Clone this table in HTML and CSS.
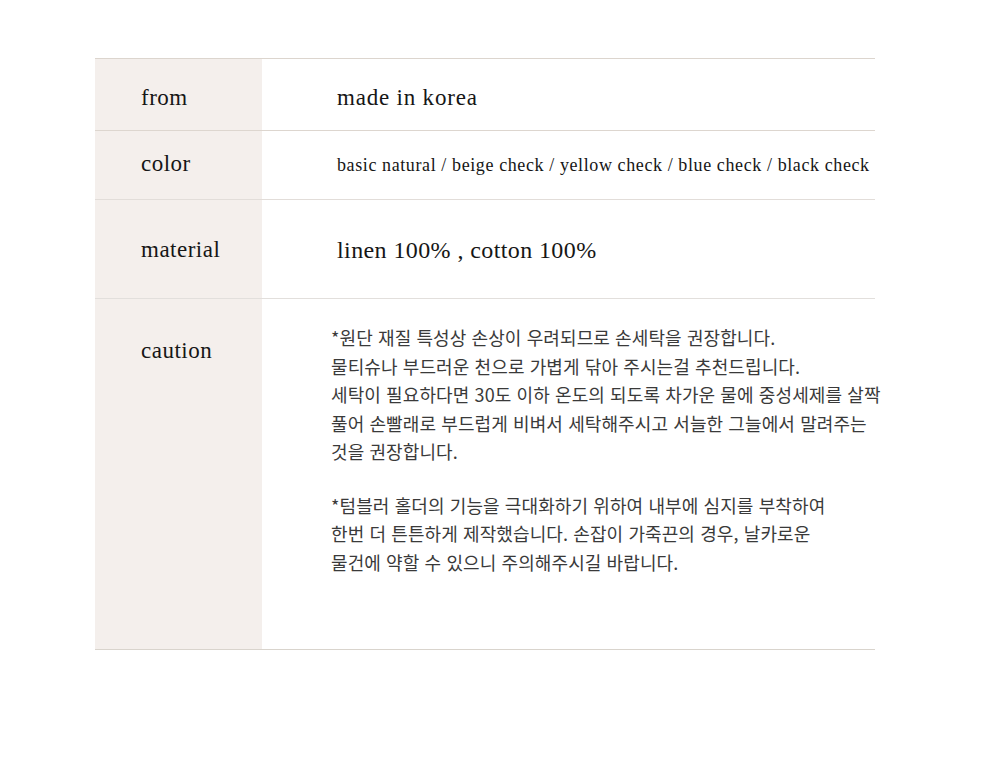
FILE: index.html
```html
<!DOCTYPE html>
<html lang="ko">
<head>
<meta charset="utf-8">
<title>Product info</title>
<link rel="stylesheet" href="styles.css">
</head>
<body>
<div class="table">
  <div class="row row-from">
    <div class="label">from</div>
    <div class="value">made in korea</div>
  </div>
  <div class="row row-color">
    <div class="label">color</div>
    <div class="value small">basic natural / beige check / yellow check / blue check / black check</div>
  </div>
  <div class="row row-material">
    <div class="label">material</div>
    <div class="value">linen 100% , cotton 100%</div>
  </div>
  <div class="row row-caution">
    <div class="label label-top">caution</div>
    <div class="value ko">
      <p>*원단 재질 특성상 손상이 우려되므로 손세탁을 권장합니다.<br>물티슈나 부드러운 천으로 가볍게 닦아 주시는걸 추천드립니다.<br>세탁이 필요하다면 30도 이하 온도의 되도록 차가운 물에 중성세제를 살짝<br>풀어 손빨래로 부드럽게 비벼서 세탁해주시고 서늘한 그늘에서 말려주는<br>것을 권장합니다.</p>
      <p>*텀블러 홀더의 기능을 극대화하기 위하여 내부에 심지를 부착하여<br>한번 더 튼튼하게 제작했습니다. 손잡이 가죽끈의 경우, 날카로운<br>물건에 약할 수 있으니 주의해주시길 바랍니다.</p>
    </div>
  </div>
</div>
</body>
</html>
```

FILE: styles.css
```css
html, body {
  margin: 0;
  padding: 0;
  background: #ffffff;
}

body {
  padding: 58px 0 0 95px;
  font-family: "Liberation Serif", "Times New Roman", serif;
  color: #161616;
}

.table {
  width: 780px;
  border-top: 1px solid #dcd5ce;
}

.row {
  display: grid;
  grid-template-columns: 167px 1fr;
  border-bottom: 1px solid #ddd6cf;
}

.row-from { height: 71px; }
.row-color { height: 68px; border-bottom-color: #e2ddd9; }
.row-material { height: 98px; border-bottom-color: #e2dfdc; }
.row-caution { height: 350px; border-bottom-color: #d9d4cd; }

.label {
  background: #f4efec;
  padding-left: 46px;
  display: flex;
  align-items: center;
  font-size: 23px;
  letter-spacing: 0.5px;
}

.value {
  display: flex;
  align-items: center;
  padding-left: 75px;
  font-size: 23px;
  letter-spacing: 0.8px;
  white-space: nowrap;
}

.row-from .label,
.row-from .value {
  padding-top: 6px;
}

.row-color .label {
  padding-bottom: 3px;
}

.row-material .label,
.row-material .value {
  padding-top: 2px;
}

.value.small {
  font-size: 18px;
  letter-spacing: 0.6px;
}

.row-material .value {
  font-size: 24px;
  letter-spacing: 0.4px;
}

.label-top {
  align-items: flex-start;
  padding-top: 39px;
}

.value.ko {
  display: block;
  padding-left: 69px;
  padding-top: 24px;
  font-family: "Noto Sans CJK KR", "Noto Sans", sans-serif;
  font-size: 18px;
  line-height: 28.5px;
  letter-spacing: 0.1px;
  color: #3a3a3a;
}

.value.ko p {
  margin: 0 0 25px 0;
}
```
